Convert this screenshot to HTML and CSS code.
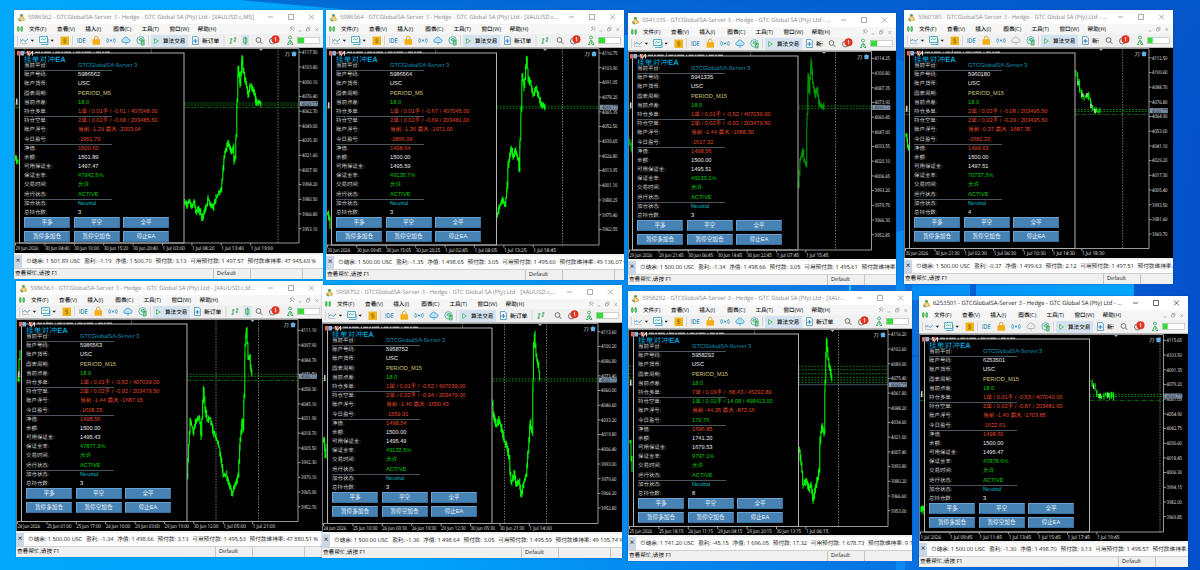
FILE: index.html
```
<!DOCTYPE html>
<html lang="zh">

<head>
    <meta charset="utf-8">
    <meta name="viewport" content="width=device-width, initial-scale=1.0">
    <title>GTCGlobalSA</title>
    <link rel="stylesheet" href="styles.css">
</head>

<body>
    <svg class="wallpaper" viewBox="0 0 1200 570" preserveAspectRatio="none">
        <defs>
            <linearGradient id="base" x1="0" y1="0" x2="1" y2="0">
                <stop offset="0" stop-color="#03a8fc" />
                <stop offset=".35" stop-color="#00a2fb" />
                <stop offset=".55" stop-color="#0589ee" />
                <stop offset=".76" stop-color="#0872e2" />
                <stop offset="1" stop-color="#0450cb" />
            </linearGradient>
            <linearGradient id="top" x1="0" y1="0" x2="0" y2="1">
                <stop offset="0" stop-color="#0458c8" stop-opacity=".75" />
                <stop offset="1" stop-color="#0458c8" stop-opacity="0" />
            </linearGradient>
            <linearGradient id="pane" x1="0" y1="0" x2="1" y2="0">
                <stop offset="0" stop-color="#058cf5" />
                <stop offset="1" stop-color="#04a4fb" />
            </linearGradient>
        </defs>
        <rect width="1200" height="570" fill="url(#base)" />
        <polygon points="240,0 1200,0 1200,200 900,60" fill="url(#top)" />
        <polygon points="896,232 905,230 905,570 896,570" fill="#0a8af0" />
        <polygon points="912,285 1134,284 1134,300 912,300" fill="url(#pane)" />
        <rect x="970" y="284" width="6" height="14" fill="#0560d2" />
        <rect x="912" y="355" width="8" height="2" fill="#0560d2" />
        <rect x="849" y="285" width="2" height="8" fill="#1cc0fb" />
    </svg>

    <main id="desktop"></main>

    <template>
        <article class="window">
            <header class="titlebar">
                <svg class="logo" viewBox="0 0 10 10">
                    <path d="M2.500 5C1 7 1 9 5 9s4.500-1.500 3-4L5.500 2.500z" fill="#e3b54a" />
                    <path d="M5 1l2 1-1 2H4L3 2z" fill="#4d9b54" />
                    <path d="M1.500 6.500a3 3 0 0 0 3 2.500" stroke="#2d8c63" fill="none" />
                    <path d="M6 5.300H4.500v1.200H6v1.200H4.300" stroke="#fff" stroke-width=".7" fill="none" />
                </svg>
                <h2 class="caption"></h2>
                <svg class="controls" viewBox="0 0 52 14">
                    <path d="M1 7h5M21.500 4.500h5v5h-5zM42 4.500l5 5M47 4.500l-5 5" />
                </svg>
            </header>
            <nav class="menu">
                <svg class="menuicon" viewBox="0 0 6 6"><path d="M1.300 0v6M4.700 0v6M.5 1.200h1.600v3.500H.5zM3.900 1.200h1.600v3.500H3.900z" /></svg>
                <span>文件(F)</span><span>查看(V)</span><span>插入(I)</span><span>图表(C)</span><span>工具(T)</span><span>窗口(W)</span><span>帮助(H)</span>
                <svg class="mdi" viewBox="0 0 32 6">
                    <path class="pin" d="M1 1l4 4M5 1h-3v2M1 5l2-2M4 3l2-1" />
                    <path d="M9.500 5h3M17.500 2.500h2.500v2.500h-2.500zM18.500 2.500V1.200h2.500v2.500h-1M26.500 2l2.500 3M29 2l-2.500 3" />
                </svg>
            </nav>
            <div class="toolbar">
                <svg class="tools" viewBox="0 0 132 13">
                    <path d="M.5 2v9M55.500 1.500v10M131.500 1.500v10" stroke="#c3c3c3" stroke-width=".6" />
                    <path d="M3.500 4v5.500h7" stroke="#a9b4bc" stroke-width=".6" fill="none" />
                    <path d="M4 7l2-1.500 2 2 3-2.500" stroke="#2d86b5" stroke-width=".8" fill="none" />
                    <path d="M13.700 5.700h3.400l-1.700 2.100zM33.500 5.700h3.400l-1.700 2.100z" fill="#222" />
                    <path d="M22.500 2.500h8v6h-8zM24 10.500h7V5" stroke="#3a9abd" stroke-width=".8" fill="#e5f6fb" />
                    <path d="M24 6l1.500-1.500L27 6l2-1.500" stroke="#43aa6d" stroke-width=".7" fill="none" />
                    <rect x="43.500" y="2.500" width="8.500" height="8.500" rx=".6" fill="#f0b518" />
                    <path d="M49.300 5h-2.900v1.700h2.600v1.900h-2.900M47.700 3.800v6" stroke="#a87400" stroke-width=".7" fill="none" />
                    <text x="60" y="9" textLength="8.500" lengthAdjust="spacingAndGlyphs" class="ide">IDE</text>
                    <path d="M75.500 5.200h7.500v5.500h-7.500z" fill="#f5ae13" />
                    <path d="M77.400 5.200V4a1.800 1.800 0 0 1 3.600 0v1.200" stroke="#d59a16" stroke-width=".8" fill="none" />
                    <circle cx="94" cy="6.500" r=".9" fill="#2a8fc0" />
                    <path d="M92 4.800q-1 1.700 0 3.400M96 4.800q1 1.700 0 3.400M90.500 4q-1.500 2.500 0 5M97.500 4q1.500 2.500 0 5" stroke="#3d9bc8" stroke-width=".8" fill="none" />
                    <path class="cloud" d="M106 8.500a1.800 1.800 0 0 1 .3-3.500 2.600 2.600 0 0 1 5-.2 1.900 1.900 0 0 1 .5 3.700zM109 8v3" />
                    <circle cx="123.500" cy="6.300" r="3.700" fill="#e7f3f3" stroke="#52a1ad" stroke-width=".8" />
                    <path d="M121.800 6.500a2 2 0 1 1 2.500 1.800M124.300 11V6.500h2.800V11z" stroke="#42ab68" stroke-width=".8" fill="#8fd0a2" />
                </svg>
                <div class="algo">
                    <svg viewBox="0 0 5 6"><path d="M.6.600l3.700 2.400L.6 5.400z" /></svg>
                    <span>算法交易</span>
                </div>
                <div class="order">
                    <svg viewBox="0 0 7 9"><path d="M.5.500h4.500l1.400 1.500v6.500H.5z" /><path class="plus" d="M3.400 3v4M1.400 5h4" /></svg>
                    <span>新订单</span>
                </div>
                <svg class="charttypes" viewBox="0 0 26 13" preserveAspectRatio="xMinYMid slice">
                    <rect class="candlebox" x="18.500" y="1" width="7.500" height="11" />
                    <path d="M1 1.500v10" stroke="#c3c3c3" stroke-width=".6" />
                    <path d="M8 4v6M6.500 9H8M8 5h1.500M12 3v5M10.500 7H12M12 4h1.500" stroke="#2f9e50" stroke-width=".9" />
                    <path class="candle" d="M22.300 2.500v8M20.800 4h3v5h-3z" />
                </svg>
                <svg class="rightside" viewBox="0 0 70 13">
                    <circle cx="5.500" cy="6" r="2.400" stroke="#555" stroke-width=".8" fill="none" />
                    <path d="M7.300 7.800l2 2" stroke="#555" stroke-width=".9" />
                    <circle cx="19.500" cy="7" r="3" stroke="#555" stroke-width=".8" fill="none" />
                    <circle cx="22.500" cy="5.300" r="4" fill="#dd3522" />
                    <path d="M21.700 4.200l1-.7v3.800" stroke="#fff" stroke-width=".8" fill="none" />
                    <path d="M37 5a1.500 1.500 0 1 1 .1 0zM34.500 10.500l2-4h1.300l2 4M34.300 10.500h2M38 10.500h2M37.200 7v3" stroke="#3aaa5b" stroke-width=".9" fill="none" />
                    <rect x="44.400" y="3.300" width="22.200" height="6.200" stroke="#b5b5b5" stroke-width=".6" fill="#fff" />
                    <rect class="level" x="44.700" y="3.600" height="5.600" fill="#39d939" />
                </svg>
            </div>
            <section class="chart">
                <svg class="plot"></svg>
                <div class="hud">
                    <h3>挂单对冲<b>EA</b></h3>
                    <dl></dl>
                    <div class="knapper">
                        <button>平多</button><button>平空</button><button>全平</button>
                        <button>暂停多加仓</button><button>暂停空加仓</button><button>停止EA</button>
                    </div>
                </div>
            </section>
            <div class="account">
                <i>×</i>
                <p></p>
            </div>
            <footer class="status">
                <span class="help">查看帮忙,请按 F1</span><span class="profile">Default</span><span class="cell"></span><span class="grip"></span>
            </footer>
        </article>
    </template>

    <script src="script.js"></script>
</body>

</html>
```
FILE: styles.css
```
* {
    box-sizing: border-box;
}

body {
    margin: 0;
    width: 1200px;
    height: 570px;
    overflow: hidden;
    background-color: #03a0fa;
    font-family: "Open Sans", "Noto Sans CJK SC", sans-serif;
    text-rendering: geometricPrecision;
}

.wallpaper {
    position: absolute;
    width: 1200px;
    height: 570px;
}

.window {
    position: absolute;
    display: flex;
    flex-direction: column;
    overflow: hidden;
    background-color: #f0f0f0;
    box-shadow: 0 0 2px rgba(0, 40, 90, .35);
}

.window svg {
    display: block;
    flex: none;
}

/* titel */

.titlebar {
    display: flex;
    align-items: center;
    height: 14px;
    flex: none;
    background-color: #fff;
    padding-left: 3px;
}

.logo {
    width: 9px;
    height: 9px;
}

.caption {
    flex: 1;
    margin: 0 0 0 2px;
    font-size: 5.900px;
    font-weight: 400;
    line-height: 14px;
    color: #858585;
    white-space: nowrap;
}

.controls {
    width: 52px;
    height: 14px;
    margin-right: 4px;
}

.controls path {
    fill: none;
    stroke: #888;
    stroke-width: .7;
}

.active .caption {
    color: #111;
}

.active .controls path {
    stroke: #222;
}

/* menu */

.menu {
    display: flex;
    align-items: center;
    height: 10px;
    flex: none;
    background-color: #f6f6f6;
    font-size: 5.600px;
    font-weight: 500;
    line-height: 10px;
    color: #111;
    white-space: nowrap;
}

.menuicon {
    width: 6px;
    height: 6px;
    margin: 0 6px 0 3px;
}

.menuicon path {
    fill: none;
    stroke: #37b24d;
    stroke-width: .8;
}

.menu span {
    width: 28.100px;
    flex: none;
}

.mdi {
    width: 32px;
    height: 6px;
    margin-left: auto;
    margin-right: 2px;
}

.menu span:last-of-type {
    width: 20px;
}

.mdi path {
    fill: none;
    stroke: #999;
    stroke-width: .6;
}

.sharp .pin {
    display: none;
}

/* toolbar */

.toolbar {
    display: flex;
    align-items: center;
    height: 14px;
    flex: none;
    padding-left: 3px;
    border-bottom: 1px solid #b9b9b9;
    font-size: 5.800px;
    font-weight: 500;
    color: #111;
    white-space: nowrap;
}

.tools {
    width: 132px;
    height: 13px;
}

.ide {
    font-family: "Open Sans", sans-serif;
    font-size: 6.500px;
    fill: #2586b8;
    stroke: #2586b8;
    stroke-width: .15;
}

.cloud {
    fill: #b9e0f3;
    stroke: #3f9fd0;
    stroke-width: .8;
}

.sharp .cloud {
    fill: #eee;
    stroke: #aaa;
}

.algo {
    display: flex;
    align-items: center;
    gap: 4px;
    width: 37px;
    height: 12px;
    flex: none;
    margin-left: 2px;
    padding-left: 3px;
    background-color: #d5e3f0;
}

.algo svg {
    width: 5px;
    height: 6px;
}

.algo path {
    fill: #dcf5e2;
    stroke: #2fa855;
    stroke-width: .7;
}

.algo span {
    font-size: 5.600px;
}

.order {
    display: flex;
    align-items: center;
    gap: 3px;
    flex: none;
    width: 31px;
    margin-left: 4px;
    overflow: hidden;
}

.order svg {
    width: 7px;
    height: 9px;
}

.order path {
    fill: #eef6fb;
    stroke: #3387b5;
    stroke-width: .7;
}

.order .plus {
    stroke: #2377c8;
    stroke-width: .9;
}

.short .order {
    width: 17px;
}

.charttypes {
    width: 26px;
    height: 13px;
}

.candlebox {
    fill: #d5e3f0;
}

.candle {
    fill: #e5f7e9;
    stroke: #2f9e50;
    stroke-width: .8;
}

.bars .candle,
.bars .candlebox {
    display: none;
}

.bars .charttypes {
    width: 17px;
}

.plain .charttypes,
.short .charttypes {
    display: none;
}

.rightside {
    width: 70px;
    height: 13px;
    margin-left: auto;
}

/* graf */

.chart {
    position: relative;
    flex: 1;
    background-color: #000;
    border-left: 1px solid #777;
    min-height: 0;
}

.plot {
    width: 100%;
    height: 100%;
}

.plot text {
    font-family: "Open Sans", "Noto Sans CJK SC", sans-serif;
    font-size: 5.200px;
    fill: #e2e2e2;
}

.plot .tagtext {
    fill: #10202e;
}

.frame {
    fill: none;
    stroke: #a9a9a9;
    stroke-width: .9;
}

.panelframe {
    fill: #000;
    stroke: #b4b4b4;
    stroke-width: 1;
}

.day {
    stroke: #8d8d8d;
    stroke-width: .8;
    stroke-dasharray: 1.500 1.300;
}

.level-dash {
    stroke: #139413;
    stroke-width: .8;
    stroke-dasharray: 1.800 1.400;
}

.level-dot {
    stroke: #118211;
    stroke-width: .8;
    stroke-dasharray: 4 1.200 1 1.200;
}

.level-line {
    stroke: #55677a;
    stroke-width: .8;
}

.bar {
    fill: none;
    stroke: #00f800;
    stroke-width: 1.050;
}

.dim {
    stroke: #009a00;
}

.hud {
    position: absolute;
    top: 6px;
    font-family: "Liberation Sans", "Noto Sans CJK SC", sans-serif;
}

.hud h3 {
    margin: 0;
    height: 8px;
    font-size: 7.600px;
    line-height: 12px;
    font-weight: 400;
    color: #00a5dc;
    letter-spacing: .2px;
}

.hud h3 b {
    letter-spacing: 0;
}

.hud dl {
    margin: 0 0 -1px;
    display: grid;
    grid-template-columns: 54px 100px;
    grid-auto-rows: 9.200px;
    font-size: 5.680px;
    line-height: 9.600px;
    white-space: nowrap;
}

.hud dt {
    color: #cfcfcf;
    font-size: 5.450px;
}

.hud dd {
    margin: 0;
    color: #ececec;
}

.hud dt.rule {
    width: 88px;
    border-bottom: 1px solid #4b5560;
}

.hud dd.platform {
    color: #0f93bd;
}

.hud dd.khaki {
    color: #cfc27c;
}

.hud dd.up {
    color: #00cc00;
}

.hud dd.down {
    color: #e04a2d;
}

.hud dd.cyan {
    color: #00bcc8;
}

.knapper {
    position: relative;
    display: grid;
    grid-template-columns: repeat(3, 46px);
    grid-auto-rows: 11px;
    gap: 3px 3.500px;
}

.knapper button {
    padding: 0;
    border: 1px solid #3d6f9c;
    border-top-color: #6aa3d2;
    border-left-color: #6aa3d2;
    background-color: #4682b4;
    color: #eef4fa;
    font-family: "Liberation Sans", "Noto Sans CJK SC", sans-serif;
    font-size: 5.600px;
    line-height: 9px;
}

/* bund */

.account {
    display: flex;
    height: 13px;
    flex: none;
    margin-top: 2px;
    background-color: #fff;
    font-size: 5.650px;
    line-height: 13px;
    white-space: nowrap;
    overflow: hidden;
}

.account i {
    width: 8px;
    flex: none;
    background-color: #cbd6e6;
    color: #222;
    font-style: normal;
    font-size: 8px;
    line-height: 11px;
    text-align: center;
}

.account p {
    display: flex;
    margin: 0 0 0 4px;
    gap: 3.800px;
    color: #222;
    overflow: hidden;
}

.account p span {
    flex: none;
}

.status {
    display: flex;
    height: 11px;
    flex: none;
    border-top: 1px solid #d0d0d0;
    font-size: 5.600px;
    line-height: 9px;
    color: #111;
    white-space: nowrap;
    overflow: hidden;
}

.status span {
    flex: none;
}

.help {
    width: 199px;
    padding-left: 1px;
}

.profile {
    width: 37px;
    padding-left: 3px;
    border-left: 1px solid #c4c4c4;
}

.cell {
    width: 52px;
    border-left: 1px solid #c4c4c4;
}

.grip {
    width: 30px;
    border-left: 1px solid #c4c4c4;
}
```
FILE: script.js
```
const platform = "GTCGlobalSA-Server 3";
const labels = ["当前平台:", "账户号码:", "账户货币:", "图表周期:", "当前点差:", "持仓多单:", "持仓空单:", "账户浮亏:", "今日盈亏:", "净值:", "余额:", "可用保证金:", "保证金率:", "交易时间:", "运行状态:", "加仓状态:", "总持仓数:"];
const rules = [0, 5, 8, 14];

// x, y, w, h og alle grafpunkter er i skrivebordets koordinater
const windows = [
    {
        id: "5986562", tail: "[XAUUSD.c,M5]", kind: "", x: 14, y: 10, w: 309, h: 269, textX: 24, panel: 184, axis: 299, bottom: 243,
        period: "PERIOD_M5", buy: "1单 / 0.01手 / -0.61 / 407048.00", sell: "2单 / 0.02手 / -0.68 / 203485.50", loss: "当前 -1.29 最大 -2003.04",
        today: "-1951.79", equity: "1500.60", balance: "1501.89", free: "1497.47", ratio: "47942.5%", count: 3,
        account: ["1 501.89", "-1.19", "1 500.70", "3.13", "1 497.57", "47 945.69 %"],
        price: [4117.5, 13.7, 52.3], tag: 103.7, days: [24.5, 151.5, 278], dash: [103, 105], dot: [107.4],
        times: ["29 Jun 2026", "30 Jun 04:40", "30 Jun 10:00", "30 Jun 15:20", "30 Jun 20:40", "1 Jul 03:00", "1 Jul 08:20", "1 Jul 13:40", "1 Jul 19:00"],
        left: [15.5, 158, 17, 162, 19, 164],
        curve: [184, 202, 187, 205, 189, 200, 191, 207, 194, 203, 196, 212, 198, 208, 200, 212, 202, 219, 204, 213, 206, 206, 208, 199, 211, 205, 213, 207, 216, 198, 219, 192, 221, 189, 222, 180, 223, 168, 224, 157, 226, 148, 228, 143, 231, 152, 233, 147, 234, 162, 235, 158, 236, 135, 237, 100, 238, 68, 240, 84, 242, 57, 243, 70, 245, 80, 248, 94, 250, 86, 253, 90, 256, 102, 261, 104]
    },
    {
        id: "5986564", tail: "[XAUUSD.c...", kind: "bars", x: 326, y: 10, w: 298, h: 270, textX: 336, panel: 496.5, axis: 599, bottom: 245,
        period: "PERIOD_M5", buy: "1单 / 0.01手 / -0.67 / 407045.00", sell: "2单 / 0.02手 / -0.69 / 203481.00", loss: "当前 -1.36 最大 -1971.00",
        today: "-1866.09", equity: "1498.64", balance: "1500.00", free: "1495.59", ratio: "49135.7%", count: 3,
        account: ["1 500.00", "-1.35", "1 498.65", "3.05", "1 495.60", "49 136.07 %"],
        price: [4116.75, 12.85, 53], tag: 107.3, days: [435.7, 562.5], dash: [106.2, 108.2], dot: [],
        times: ["30 Jun 2026", "30 Jun 09:45", "30 Jun 15:05", "30 Jun 20:25", "1 Jul 02:45", "1 Jul 08:05", "1 Jul 13:25", "1 Jul 18:45"],
        left: [327.5, 212, 329, 220, 331, 230],
        curve: [496.7, 216, 499, 208, 502, 200, 505, 205, 507, 185, 508, 165, 511, 148, 513, 158, 515, 150, 518, 160, 519, 170, 520, 140, 521, 110, 522, 75, 524, 88, 526.5, 57, 528, 78, 531, 85, 533, 96, 536, 88, 538, 95, 541, 104, 545, 107]
    },
    {
        id: "5941335", tail: "...", kind: "short", x: 628, y: 13, w: 268, h: 272, textX: 637, panel: 798, axis: 871.5, bottom: 250, dim: true,
        period: "PERIOD_M15", buy: "1单 / 0.01手 / -0.52 / 407039.00", sell: "2单 / 0.02手 / -0.92 / 203479.50", loss: "当前 -1.44 最大 -1688.30",
        today: "-1617.32", equity: "1498.56", balance: "1500.00", free: "1495.51", ratio: "49133.1%", count: 3,
        account: ["1 500.00", "-1.34", "1 498.66", "3.05", "1 495.61", "49 134.75 %"],
        price: [4114.25, 13.45, 58.3], tag: 107.4, days: [666.5, 750.7, 835.5], dash: [106, 108.7], dot: [],
        times: ["29 Jun 2026", "29 Jun 21:45", "30 Jun 06:45", "30 Jun 14:45", "30 Jun 22:45", "1 Jul 07:45", "1 Jul 15:45"],
        left: [629, 142, 631, 150, 632.5, 140],
        curve: [798.3, 184, 800, 160, 803, 150, 804, 160, 806, 165, 807, 115, 808, 75, 809, 92, 811, 61, 812.5, 82, 815, 95, 817, 90, 819, 104, 824, 107]
    },
    {
        id: "5960180", tail: "...", kind: "short sharp", x: 904, y: 10, w: 269, h: 274, textX: 914, panel: 1075, axis: 1149, bottom: 248.5,
        period: "PERIOD_M15", buy: "2单 / 0.02手 / -0.08 / 203495.50", sell: "2单 / 0.02手 / -0.29 / 203495.50", loss: "当前 -0.37 最大 -1687.35",
        today: "-1681.20", equity: "1499.63", balance: "1500.00", free: "1497.51", ratio: "70737.3%", count: 4,
        account: ["1 500.00", "-0.37", "1 499.63", "2.12", "1 497.51", "70 737.30 %"],
        price: [4112.5, 11.9, 57.7], tag: 110.7, days: [952.5, 1122.7], dash: [109.5, 111.5], dot: [114.4], candles: true,
        times: ["30 Jun 2026", "30 Jun 21:30", "1 Jul 02:30", "1 Jul 06:30", "1 Jul 10:30", "1 Jul 14:30", "1 Jul 18:30"],
        left: [906, 135, 907.5, 145, 909.5, 155],
        curve: [1076, 74, 1078, 83, 1080, 91, 1082, 95, 1084, 97, 1087, 95, 1089, 98, 1091, 106, 1093, 109, 1095, 111, 1101, 111]
    },
    {
        id: "5986563", tail: "[XAUUSD.c,M...", kind: "", x: 16, y: 281, w: 307, h: 276, textX: 26, panel: 187, axis: 298, bottom: 521.5,
        period: "PERIOD_M15", buy: "1单 / 0.01手 / -0.52 / 407039.00", sell: "2单 / 0.02手 / -0.92 / 203479.50", loss: "当前 -1.44 最大 -1687.15",
        today: "-1608.25", equity: "1498.56", balance: "1500.00", free: "1495.43", ratio: "47877.3%", count: 3,
        account: ["1 500.00", "-1.34", "1 498.66", "3.13", "1 495.53", "47 880.51 %"],
        price: [4111.1, 13.2, 330.3], tag: 376.3, days: [47, 131.5, 216, 258.5], dash: [374.3, 376.6], dot: [380.4],
        times: ["24 Jun 2026", "25 Jun 01:00", "25 Jun 17:00", "26 Jun 10:00", "29 Jun 03:00", "29 Jun 19:00", "30 Jun 12:00", "1 Jul 05:00", "1 Jul 21:00"],
        left: [18, 380, 19, 360, 20.5, 350],
        curve: [187, 476, 188.5, 445, 190, 420, 191.5, 426, 193, 432, 196, 420, 199, 417, 201, 436, 203.3, 388, 205, 410, 207, 420, 210, 418, 213, 432, 216, 438, 219, 448, 221, 460, 223, 474, 226, 474, 228, 482, 230, 488, 232, 494, 235, 485, 238, 475, 240, 440, 242, 420, 243, 430, 244, 395, 245, 345, 246.3, 330, 248, 356, 249.5, 358, 251, 372, 252.5, 377]
    },
    {
        id: "5958752", tail: "[XAUUSD.c,...", kind: "bars", x: 322, y: 285, w: 300, h: 273, textX: 332, panel: 492, axis: 598, bottom: 523.5,
        period: "PERIOD_M15", buy: "1单 / 0.01手 / -0.52 / 407039.00", sell: "2单 / 0.02手 / -0.94 / 203479.00", loss: "当前 -1.46 最大 -1650.43",
        today: "-1559.91", equity: "1498.54", balance: "1500.00", free: "1495.49", ratio: "49132.5%", count: 3,
        account: ["1 500.00", "-1.36", "1 498.64", "3.05", "1 495.59", "49 135.74 %"],
        price: [4113.6, 13.4, 331.7], tag: 380, days: [378, 462.5, 504.5, 546.5], dash: [378.8, 381], dot: [],
        times: ["24 Jun 2026", "25 Jun 10:30", "26 Jun 03:30", "26 Jun 19:30", "29 Jun 12:30", "30 Jun 05:30", "30 Jun 21:30", "1 Jul 14:00"],
        left: [323.5, 440, 325, 455, 327, 438],
        curve: [492.3, 402, 493, 415, 496, 425, 499, 420, 501, 428, 504, 440, 507, 448, 509, 458, 510, 475, 511, 483, 514, 474, 516, 485, 519, 482, 521, 496, 523, 485, 526, 475, 528, 450, 530, 422, 532, 433, 533, 380, 533.5, 345, 534.3, 334, 536, 356, 538, 365, 540, 380]
    },
    {
        id: "5958292", tail: "[XAU...", kind: "plain", x: 628, y: 291, w: 284, h: 270, textX: 638, panel: 798.5, axis: 888, bottom: 526.5,
        period: "PERIOD_M15", buy: "7单 / 0.09手 / -58.43 / 45292.89", sell: "1单 / 0.01手 / 14.08 / 408413.00", loss: "当前 -44.35 最大 -872.16",
        today: "179.76", equity: "1696.85", balance: "1741.20", free: "1679.53", ratio: "9797.1%", count: 8, profit: true,
        account: ["1 741.20", "-45.15", "1 696.05", "17.32", "1 678.73", "9 792.49 %"],
        price: [4116.2, 13.6, 334.3], tag: 384.7, days: [669.5, 754.5, 838.5], dash: [366.3, 369.7, 373.7, 377.3, 380, 382.5], dot: [], line: 384.7,
        times: ["25 Jun 2026", "25 Jun 18:15", "26 Jun 11:15", "29 Jun 04:15", "29 Jun 20:15", "30 Jun 13:15", "1 Jul 06:15"],
        left: [630, 443, 631, 460, 633, 478],
        curve: [798.5, 448, 801, 463, 803, 486, 806, 480, 809, 490, 811, 485, 813, 500, 816, 484, 819, 470, 820, 440, 821.5, 425, 824, 434, 825, 380, 826.3, 340, 828, 360, 831, 375, 832.5, 384]
    },
    {
        id: "6253501", tail: "...", kind: "short sharp active", x: 919, y: 296, w: 269, h: 271, textX: 929, panel: 1089.5, axis: 1163.5, bottom: 532,
        period: "PERIOD_M15", buy: "1单 / 0.01手 / -0.53 / 407040.00", sell: "2单 / 0.02手 / -0.87 / 203481.00", loss: "当前 -1.40 最大 -1703.85",
        today: "-1622.61", equity: "1498.60", balance: "1500.00", free: "1495.47", ratio: "47878.6%", count: 3,
        account: ["1 500.00", "-1.30", "1 498.70", "3.13", "1 495.57", "47 881.79 %"],
        price: [4115.65, 12.15, 340.3], tag: 396, days: [1160], dash: [394.5, 396.5], dot: [400.4], candles: true,
        times: ["1 Jul 2026", "1 Jul 09:45", "1 Jul 11:45", "1 Jul 13:45", "1 Jul 15:45", "1 Jul 17:45", "1 Jul 19:45"],
        left: [921, 510, 923, 508, 924.5, 514],
        curve: [1090.5, 381, 1093.5, 387, 1097, 394, 1100, 396, 1104, 396, 1108, 395, 1112, 396, 1116, 397]
    }
];

document.addEventListener("DOMContentLoaded", start);

function start() {
    const desktop = document.querySelector("#desktop");
    const skabelon = document.querySelector("template").content;
    windows.forEach(win => {
        const klon = skabelon.cloneNode(true);
        const el = klon.querySelector(".window");
        el.className = "window " + win.kind;
        el.style.left = win.x + "px";
        el.style.top = win.y + "px";
        el.style.width = win.w + "px";
        el.style.height = win.h + "px";
        klon.querySelector(".caption").textContent = `${win.id} - ${platform} - Hedge - GTC Global SA (Pty) Ltd - ${win.tail}`;
        klon.querySelector(".level").setAttribute("width", win.kind.includes("sharp") ? 5 : 6.5);
        klon.querySelector(".hud").style.left = (win.textX - win.x - 1) + "px";
        klon.querySelector("dl").innerHTML = hudRows(win);
        klon.querySelector(".account p").innerHTML = accountLine(win.account);
        drawPlot(klon.querySelector(".plot"), win);
        desktop.appendChild(klon);
    });
}

function hudRows(win) {
    const rows = [
        [platform, "platform"], [win.id, ""], ["USC", ""], [win.period, "khaki"], ["18.0", "up"],
        [win.buy, "down"], [win.sell, win.profit ? "up" : "down"], [win.loss, "down"], [win.today, win.profit ? "up" : "down"],
        [win.equity, "down"], [win.balance, ""], [win.free, ""], [win.ratio, "up"], ["允许", "up"],
        ["ACTIVE", "up"], ["Neutral", "cyan"], [win.count, ""]
    ];
    return rows.map((row, i) => `<dt class="${rules.includes(i) ? "rule" : ""}">${labels[i]}</dt><dd class="${row[1]}">${row[0]}</dd>`).join("");
}

function accountLine(a) {
    return `<span>⊙结余: ${a[0]} USC</span><span>盈利: ${a[1]}</span><span>净值: ${a[2]}</span><span>预付款: ${a[3]}</span><span>可用预付款: ${a[4]}</span><span>预付款维持率: ${a[5]}</span>`;
}

// små udsving omkring kurven, så den ligner kursbarer
function wobble(n) {
    const s = Math.sin(n * 12.9898) * 43758.5453;
    return s - Math.floor(s);
}

function barPath(points, step, spread) {
    let d = "";
    let prev = points[1];
    for (let i = 0; i < points.length - 2; i += 2) {
        const [x1, y1, x2, y2] = points.slice(i, i + 4);
        for (let x = x1; x < x2; x += step) {
            const y = y1 + (y2 - y1) * (x - x1) / (x2 - x1);
            const top = Math.min(prev, y) - wobble(x) * spread;
            const low = Math.max(prev, y) + wobble(x + 7) * spread;
            d += `M${x.toFixed(1)} ${top.toFixed(1)}V${low.toFixed(1)}`;
            prev = y;
        }
    }
    return d;
}

function drawPlot(svg, win) {
    const x0 = win.x + 1;
    const y0 = win.y + 38;
    const h = win.h - 64;
    svg.setAttribute("viewBox", `${x0} ${y0} ${win.w - 1} ${h}`);
    const last = win.curve[win.curve.length - 2];
    let s = "";

    win.days.forEach(x => s += `<path class="day" d="M${x} ${y0}V${win.bottom}"/>`);
    win.dash.forEach(y => s += `<path class="level-dash" d="M${x0} ${y}H${win.axis}"/>`);
    win.dot.forEach(y => s += `<path class="level-dot" d="M${x0} ${y}H${win.axis}"/>`);
    if (win.line) s += `<path class="level-line" d="M${x0} ${win.line}H${win.axis}"/>`;

    s += `<path class="bar ${win.dim ? "dim" : ""}" d="${barPath(win.left, 1, 4)}"/>`;
    s += `<path class="bar ${win.dim ? "dim" : ""}" d="${barPath(win.curve, win.candles ? 1.6 : .8, 4)}"/>`;
    if (win.candles) {
        for (let i = 2; i < win.curve.length - 2; i += 4) {
            s += `<rect x="${win.curve[i] - .6}" y="${win.curve[i + 1] - 2}" width="1.2" height="4" fill="#c8ffc8"/>`;
        }
    }
    s += `<rect x="${x0 + 1}" y="${win.tag - 5}" width="1.500" height="6" fill="#ccc"/>`;

    // panelet dækker venstre del af grafen
    s += `<rect class="panelframe" x="${win.textX - 4.5}" y="${y0 + 5}" width="${win.panel - win.textX + 4.5}" height="${win.bottom - y0 - 5}"/>`;
    s += `<path class="frame" d="M${x0} ${y0 + .5}H${win.axis}V${win.bottom}H${x0}"/>`;
    s += `<path d="M${win.textX + 11} ${y0 + 4.2}h75" stroke="#ddd" stroke-width="1" stroke-dasharray="5 1 2 .8 7 2 1 1.500"/>`;
    s += `<path d="M${win.textX - 7} ${y0 + 3}h3.500v4.500h-3.500zM${win.textX + 3} ${y0 + 3}h3.500v2l-1.500 2.500h-2z" fill="#d96a5c"/>`;
    s += `<path d="M${win.textX - 3.5} ${y0 + 3}h3.500v4.500h-3.500z" fill="#8fb2df"/>`;
    s += `<path d="M${win.textX + 3} ${y0 + 3}l2.500 4.500 3-4.500v4.500" fill="none" stroke="#eee" stroke-width=".9"/>`;

    for (let i = 0; i < 13; i++) {
        const y = win.price[2] + i * 14.7;
        s += `<path class="frame" d="M${win.axis} ${y}h2.500"/><text x="${win.axis + 3}" y="${y + 1.8}" textLength="15.500" lengthAdjust="spacingAndGlyphs">${(win.price[0] - i * win.price[1]).toFixed(2)}</text>`;
    }
    s += `<rect x="${win.axis + .8}" y="${win.tag - 2.5}" width="18" height="5" fill="#8296aa"/><text class="tagtext" x="${win.axis + 3}" y="${win.tag + 1.8}" textLength="15" lengthAdjust="spacingAndGlyphs">4069.77</text>`;

    win.times.forEach((t, i) => {
        const x = x0 + .5 + i * 29.4;
        s += `<path class="frame" d="M${x} ${win.bottom}v2.500"/><text x="${x}" y="${win.bottom + 6.6}" textLength="${t.length * 2.05}" lengthAdjust="spacingAndGlyphs">${t}</text>`;
    });

    s += `<path d="M${last - 2} ${y0 + 1}h4l-2 2z" fill="#9ab"/>`;
    s += `<text x="${win.axis - 14.5}" y="${y0 + 8}">刀</text>`;
    s += `<path d="M${win.axis - 8} ${y0 + 5}l3-1.800 3 1.800-1 .8v2.500h-4v-2.500z" fill="#5db1e6"/>`;
    svg.innerHTML = s;
}
```
